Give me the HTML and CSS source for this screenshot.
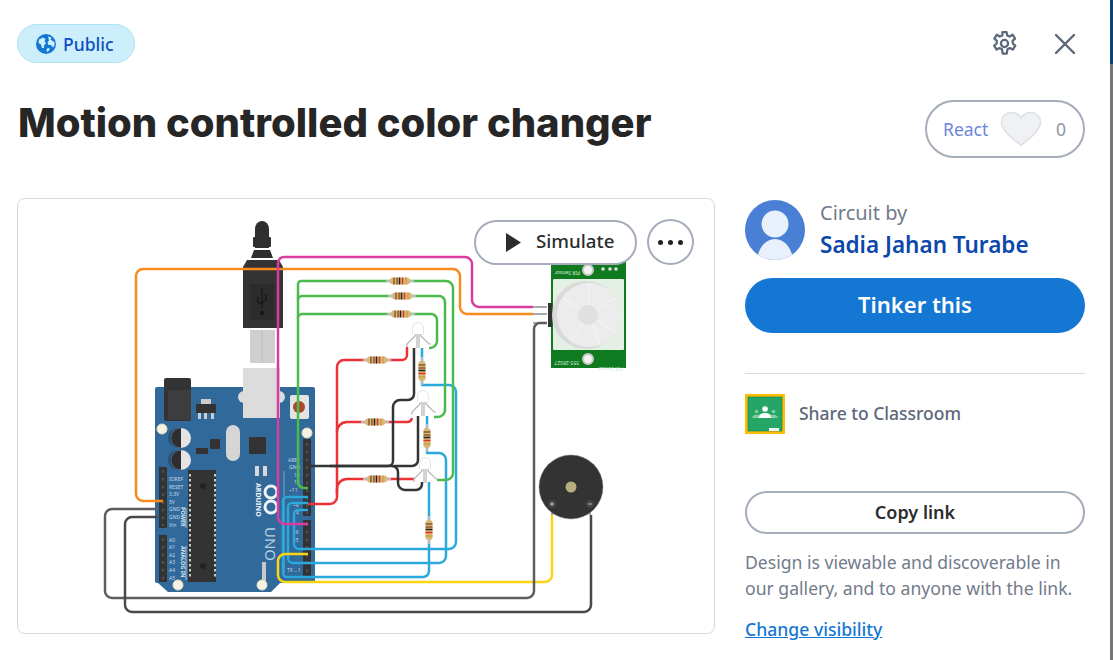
FILE: index.html
```html
<!DOCTYPE html>
<html lang="en">
<head>
    <meta charset="UTF-8">
    <meta name="viewport" content="width=device-width, initial-scale=1.0">
    <title>Motion controlled color changer</title>
    <link rel="stylesheet" href="styles.css">
</head>
<body>

    <div class="dialog">

        <div class="top-bar">
            <span class="public-pill">
                <svg class="globe" viewBox="0 0 20 20">
                    <circle cx="10" cy="10" r="10" fill="#1477d4"/>
                    <path d="M3 5.500 7 3.500 9.500 5 8.500 7.500 10 9 8 11.500 8 14 6 14 5 10.500 2.500 9Z" fill="#cdeffb"/>
                    <path d="M12 2.500 15.500 3.500 14.500 5.500 16.500 7 18.500 8 18.500 11 17 13.500 15 11 12.500 11 11.500 8.500 13 6.500Z" fill="#cdeffb"/>
                    <path d="M11 14.500 13.500 14 13.500 16 11.500 18 10.500 16.500Z" fill="#cdeffb"/>
                </svg>
                Public
            </span>
            <div class="top-icons">
                <svg class="gear" viewBox="0 0 24 24" fill="none" stroke="#5c677a" stroke-width="2" stroke-linejoin="round">
                    <circle cx="12" cy="12" r="3.200"/>
                    <path d="M10.200 1.800h3.600l.6 3 2.200 1 2.600-1.600 2.200 3.400-2.200 2 .2 2.400 2.200 1.900-2.200 3.500-2.600-1.300-2.200 1-.6 3.900h-3.600l-.6-3.900-2.200-1-2.600 1.300-2.200-3.500 2.200-1.900.2-2.400-2.200-2 2.200-3.400 2.600 1.600 2.200-1z"/>
                </svg>
                <svg class="close" viewBox="0 0 20 20" fill="none" stroke="#5c677a" stroke-width="2.400" stroke-linecap="round">
                    <path d="M1 1 19 19M19 1 1 19"/>
                </svg>
            </div>
        </div>

        <div class="title-row">
            <h1>Motion controlled color changer</h1>
            <div class="react-btn">
                <span class="react-label">React</span>
                <svg class="heart" viewBox="0 0 42 36">
                    <path d="M21 34.500C13 27.500 1.500 20 1.500 11 1.500 5.500 5.500 1.500 11 1.500 15 1.500 19 3.500 21 7 23 3.500 27 1.500 31 1.500 36.500 1.500 40.500 5.500 40.500 11 40.500 20 29 27.500 21 34.500Z" fill="#f0f1f3" stroke="#dcdfe3" stroke-width="1.500"/>
                </svg>
                <span class="react-count">0</span>
            </div>
        </div>

        <div class="content">
            <div class="circuit-card">
                <svg class="circuit" viewBox="17 198 698 436">
                    <defs>
                        <g id="res">
                            <path d="M-14 0h28" stroke="#bbb" stroke-width="2"/>
                            <rect x="-10" y="-3.500" width="20" height="7" rx="3" fill="#d8b878"/>
                            <path d="M-6-3.500v7M-3-3.500v7" stroke="#8b5a2b" stroke-width="1.500"/>
                            <path d="M-.5-3.500v7" stroke="#222" stroke-width="1.500"/>
                            <path d="M2.500-3.500v7" stroke="#e3301f" stroke-width="1.500"/>
                            <path d="M6-3.500v7" stroke="#c9a24a" stroke-width="1.500"/>
                        </g>
                        <g id="led">
                            <path d="M-5.500 2V-4a5.500 5.500 0 0 1 11 0V2" fill="#fff" stroke="#e4e4e4"/>
                            <path d="M-3 2V4L-11 12V15M-1 2V16M1 2V16M3 2V4L11 12H13" fill="none" stroke="#b4b4b4" stroke-width="1.200"/>
                        </g>
                    </defs>

                    <!-- usb cable -->
                    <path d="M250 330h25v33h-25z" fill="#cfcfcf"/>
                    <path d="M262 330v33" stroke="#bdbdbd"/>
                    <path d="M255 248v-19a7 8 0 0 1 14 0v19z" fill="#2f2f2f"/>
                    <rect x="253" y="237" width="18" height="10" rx="1" fill="#2f2f2f"/>
                    <path d="M254 250h16l3 8h-22z" fill="#2f2f2f"/>
                    <path d="M247 260h32l4 7v61h-40v-61z" fill="#333"/>
                    <rect x="250" y="284" width="24" height="36" fill="#2c2c2c"/>
                    <path d="M262 288v20M258 297v5l4 3M266 294v6l-4 3" stroke="#161616" stroke-width="1.200" fill="none"/>
                    <circle cx="262" cy="313" r="2.200" fill="#161616"/>

                    <!-- arduino board -->
                    <path d="M157 387H313a2 2 0 0 1 2 2V581a2 2 0 0 1-2 2H280L271 592H168L158 583H157a2 2 0 0 1-2-2V389a2 2 0 0 1 2-2Z" fill="#30699a"/>
                    <rect x="243" y="368" width="37" height="50" fill="#dcdcdc"/>
                    <circle cx="244" cy="397" r="6" fill="#dcdcdc"/>
                    <circle cx="279" cy="397" r="6" fill="#dcdcdc"/>
                    <rect x="290" y="395" width="19" height="24" rx="2" fill="#e3e3e3"/>
                    <circle cx="299" cy="407" r="6" fill="#a8482f"/>
                    <rect x="164" y="378" width="27" height="43" rx="2" fill="#333"/>
                    <rect x="168" y="390" width="23" height="30" fill="#3d3d3d"/>
                    <rect x="196" y="404" width="20" height="9" fill="#333"/>
                    <rect x="201" y="399" width="10" height="5" fill="#ccc"/>
                    <path d="M198 413h3v6h-3zM204 413h3v6h-3zM211 413h3v6h-3z" fill="#ccc"/>
                    <circle cx="178" cy="438" r="10" fill="#26517a"/>
                    <circle cx="181" cy="438" r="10" fill="#e4e4e4"/>
                    <path d="M181 428a10 10 0 0 0 0 20z" fill="#2e2e2e"/>
                    <circle cx="178" cy="460" r="10" fill="#26517a"/>
                    <circle cx="181" cy="460" r="10" fill="#e4e4e4"/>
                    <path d="M181 450a10 10 0 0 0 0 20z" fill="#2e2e2e"/>
                    <rect x="226" y="425" width="14" height="36" rx="7" fill="#d5d5d5"/>
                    <rect x="210" y="439" width="10" height="10" rx="1" fill="#333"/>
                    <rect x="249" y="437" width="17" height="17" rx="1" fill="#333"/>
                    <rect x="196" y="448" width="12" height="6" fill="#333"/>
                    <rect x="255" y="466" width="4" height="10" fill="#d8d8d8"/>
                    <rect x="263" y="466" width="4" height="10" fill="#d8d8d8"/>
                    <rect x="188" y="470" width="28" height="112" fill="#333"/>
                    <path d="M190 474v104M215 474v104" stroke="#fff" stroke-width="1.500" stroke-dasharray="2.500 2.500"/>
                    <circle cx="203" cy="486" r="3" fill="#222"/>
                    <circle cx="203" cy="566" r="3" fill="#222"/>
                    <rect x="159" y="467" width="8" height="61" fill="#333"/>
                    <rect x="159" y="535" width="8" height="47" fill="#333"/>
                    <rect x="303" y="439" width="8" height="77" fill="#333"/>
                    <rect x="303" y="520" width="8" height="57" fill="#333"/>
                    <path d="M307 443v71M307 523v52M163 470v56M163 538v42" stroke="#4d4d4d" stroke-width="2.500" stroke-dasharray="3 4.700"/>
                    <path d="M262 562h4v20h-4z" fill="#c8c8c8"/>
                    <path d="M284 471v102" stroke="#7fa6c6"/>
                    <path d="M186 508v20M186 546v34" stroke="#cfdde8" stroke-width=".8"/>
                    <circle cx="162" cy="429" r="5" fill="#f5f2e4" stroke="#e6dfba"/>
                    <circle cx="307" cy="433" r="5" fill="#f5f2e4" stroke="#e6dfba"/>
                    <circle cx="178" cy="585" r="5" fill="#f5f2e4" stroke="#e6dfba"/>
                    <circle cx="262" cy="585" r="5" fill="#f5f2e4" stroke="#e6dfba"/>
                    <g class="pin-text">
                        <text x="169" y="481">IOREF</text>
                        <text x="169" y="489">RESET</text>
                        <text x="169" y="496">3.3V</text>
                        <text x="169" y="504">5V</text>
                        <text x="169" y="511">GND</text>
                        <text x="169" y="519">GND</text>
                        <text x="169" y="527">Vin</text>
                        <text x="169" y="542">A0</text>
                        <text x="169" y="549">A1</text>
                        <text x="169" y="557">A2</text>
                        <text x="169" y="564">A3</text>
                        <text x="169" y="572">A4</text>
                        <text x="169" y="580">A5</text>
                        <text x="288" y="462">AREF</text>
                        <text x="289" y="469">GND</text>
                        <text x="294" y="477">13</text>
                        <text x="294" y="484">12</text>
                        <text x="289" y="492">~11</text>
                        <text x="293" y="507">~9</text>
                        <text x="296" y="514">8</text>
                        <text x="293" y="534">~6</text>
                        <text x="293" y="542">~5</text>
                        <text x="287" y="572">TX→1</text>
                    </g>
                    <text class="board-label" transform="translate(181 507) rotate(90)">POWER</text>
                    <text class="board-label" transform="translate(181 546) rotate(90)">ANALOG IN</text>
                    <text class="brand-small" transform="translate(256 483) rotate(90)">ARDUINO</text>
                    <text class="brand-uno" transform="translate(265 527) rotate(90)">UNO</text>
                    <g fill="none" stroke="#eef3f7" stroke-width="3">
                        <circle cx="271" cy="492" r="6"/>
                        <circle cx="271" cy="507" r="6"/>
                    </g>

                    <!-- part legs -->
                    <g fill="none" stroke="#a9a9a9" stroke-width="2">
                        <path d="M533 307h14M533 314h14M533 323h14M552 515V505M590 515V505"/>
                    </g>

                    <!-- wires -->
                    <g fill="none" stroke-width="2.500" stroke-linejoin="round">
                        <path stroke="#29a9dc" d="M308 497H287a4 4 0 0 0-4 4V573a4 4 0 0 0 4 4H423a6 6 0 0 0 6-6V482"/>
                        <path stroke="#29a9dc" d="M308 503H292a4 4 0 0 0-4 4V558a5 5 0 0 0 5 5H439a7 7 0 0 0 7-7V460a7 7 0 0 0-7-7H427V416"/>
                        <path stroke="#29a9dc" d="M308 510H298a4 4 0 0 0-4 4V544a5 5 0 0 0 5 5H449a7 7 0 0 0 7-7V392a7 7 0 0 0-7-7H422V348"/>
                        <path stroke="#fbd413" d="M308 554H285a7 7 0 0 0-7 7V575a7 7 0 0 0 7 7H545a7 7 0 0 0 7-7V515"/>
                        <path stroke="#5b5d60" d="M158 509H112a7 7 0 0 0-7 7V591a7 7 0 0 0 7 7H527a7 7 0 0 0 7-7V329a6 6 0 0 1 6-6H547"/>
                        <path stroke="#48494b" d="M158 517H132a7 7 0 0 0-7 7V605a7 7 0 0 0 7 7H584a7 7 0 0 0 7-7V515"/>
                        <path stroke="#f78b1c" d="M163 501H143a7 7 0 0 1-7-7V276a7 7 0 0 1 7-7H453a7 7 0 0 1 7 7V307a7 7 0 0 0 7 7H533"/>
                        <path stroke="#d93ca0" d="M308 524H285a7 7 0 0 1-7-7V263a6 6 0 0 1 6-6H465a7 7 0 0 1 7 7V300a7 7 0 0 0 7 7H533"/>
                        <path stroke="#4bbb4b" d="M308 488H304a6 6 0 0 1-6-6V284a3 3 0 0 1 3-3H446a7 7 0 0 1 7 7V473a7 7 0 0 1-7 7H437"/>
                        <path stroke="#4bbb4b" d="M298 300a4 4 0 0 1 4-4H439a6 6 0 0 1 6 6V410a7 7 0 0 1-7 7H434"/>
                        <path stroke="#4bbb4b" d="M298 318a4 4 0 0 1 4-4H431a6 6 0 0 1 6 6V341a7 7 0 0 1-7 7H429"/>
                        <path stroke="#ed3237" d="M308 504H330a7 7 0 0 0 7-7V367a7 7 0 0 1 7-7H402a5 5 0 0 0 5-5V347"/>
                        <path stroke="#ed3237" d="M337 432a10 10 0 0 1 10-10H407a5 5 0 0 0 5-4"/>
                        <path stroke="#ed3237" d="M337 494V489a10 10 0 0 1 10-10H414"/>
                        <path stroke="#333436" d="M308 466H388a5 5 0 0 0 5-5V407a7 7 0 0 1 7-7H408a6 6 0 0 0 6-6V348"/>
                        <path stroke="#333436" d="M330 466H412a6 6 0 0 0 6-6V416"/>
                        <path stroke="#333436" d="M392 466a6 6 0 0 1 6 6V483a7 7 0 0 0 7 7H416a6 6 0 0 0 6-6V482"/>
                    </g>

                    <!-- resistors -->
                    <use href="#res" x="400" y="281"/>
                    <use href="#res" x="402" y="296"/>
                    <use href="#res" x="401" y="314"/>
                    <use href="#res" x="377" y="360"/>
                    <use href="#res" x="375" y="422"/>
                    <use href="#res" x="377" y="479"/>
                    <use href="#res" transform="translate(422 371) rotate(90)"/>
                    <use href="#res" transform="translate(427 438) rotate(90)"/>
                    <use href="#res" transform="translate(429 530) rotate(90)"/>

                    <!-- rgb leds -->
                    <use href="#led" x="418" y="332"/>
                    <use href="#led" x="423" y="400"/>
                    <use href="#led" x="425" y="467"/>

                    <!-- pir sensor -->
                    <rect x="551" y="262" width="75" height="106" fill="#0f7a1f"/>
                    <rect x="553" y="279" width="71" height="71" rx="1" fill="#e3f0e3"/>
                    <rect x="548" y="303" width="4" height="24" fill="#333"/>
                    <circle cx="586" cy="315" r="34" fill="#dadada"/>
                    <circle cx="589" cy="315" r="32" fill="#ececec"/>
                    <path d="M589 315 563 298M589 315 589 283M589 315 615 298M589 315 615 332M589 315 600 345M589 315 571 341" stroke="#f4f4f4" stroke-width="1.200"/>
                    <circle cx="588" cy="315" r="10" fill="#e0e0e0"/>
                    <circle cx="588" cy="270" r="5" fill="#f3f3f3" stroke="#c9c9c9" stroke-width="2"/>
                    <circle cx="588" cy="359" r="5" fill="#f3f3f3" stroke="#c9c9c9" stroke-width="2"/>
                    <text class="pir-text" transform="translate(580 271) rotate(180)">PIR Sensor</text>
                    <text class="pir-text" transform="translate(623 367) rotate(180)">PIR Sensor</text>
                    <text class="pir-text" transform="translate(579 361) rotate(180)">555-28027</text>
                    <circle cx="603" cy="269" r="1.800" fill="#ddd"/>
                    <circle cx="610" cy="269" r="1.800" fill="#ddd"/>
                    <circle cx="616" cy="269" r="1.800" fill="#ddd"/>

                    <!-- piezo -->
                    <circle cx="571" cy="487" r="32" fill="#333" stroke="#888" stroke-width=".5"/>
                    <circle cx="571" cy="487" r="5.500" fill="#b8ab7d"/>
                    <circle cx="552" cy="504" r="4" fill="#444"/>
                    <circle cx="590" cy="504" r="4" fill="#444"/>
                    <path d="M550 504h4M552 502v4M588 504h4" stroke="#bbb"/>
                </svg>
                <div class="sim-controls">
                    <button class="sim-btn">
                        <svg class="play" viewBox="0 0 15 19"><path d="M0 0 15 9.500 0 19Z" fill="#2c2c2c"/></svg>
                        <span class="sim-label">Simulate</span>
                    </button>
                    <button class="more-btn"><span></span><span></span><span></span></button>
                </div>
            </div>

            <div class="sidebar">
                <div class="author">
                    <svg class="avatar" viewBox="0 0 60 60">
                        <clipPath id="round"><circle cx="30" cy="30" r="30"/></clipPath>
                        <g clip-path="url(#round)">
                            <rect width="60" height="60" fill="#4a7fd6"/>
                            <circle cx="30" cy="24" r="13.500" fill="#e8f0fb"/>
                            <ellipse cx="30" cy="62" rx="18" ry="23" fill="#e8f0fb"/>
                        </g>
                    </svg>
                    <div class="author-text">
                        <div class="author-label">Circuit by</div>
                        <a class="author-name">Sadia Jahan Turabe</a>
                    </div>
                </div>
                <button class="tinker-btn">Tinker this</button>
                <hr class="divider">
                <div class="classroom">
                    <svg class="classroom-icon" viewBox="0 0 40 40">
                        <rect width="40" height="40" fill="#fdbc05"/>
                        <rect x="3" y="3" width="34" height="34" fill="#25a667"/>
                        <rect x="3" y="3" width="34" height="34" fill="none" stroke="#1a8a52" stroke-width=".7"/>
                        <circle cx="20" cy="15" r="2.800" fill="#fff"/>
                        <path d="M13 24a7 5 0 0 1 14 0z" fill="#fff"/>
                        <circle cx="11.500" cy="17.500" r="1.800" fill="#7fcfa3"/>
                        <circle cx="28.500" cy="17.500" r="1.800" fill="#7fcfa3"/>
                        <path d="M7 24a4.500 3.500 0 0 1 8-2 8 6 0 0 0-2 2zM33 24a4.500 3.500 0 0 0-8-2 8 6 0 0 1 2 2z" fill="#7fcfa3"/>
                        <rect x="24" y="34" width="10" height="3" fill="#f1f1f1"/>
                    </svg>
                    <span>Share to Classroom</span>
                </div>
                <button class="copy-btn">Copy link</button>
                <p class="visibility-note">Design is viewable and discoverable in our gallery, and to anyone with the link.</p>
                <a class="visibility-link">Change visibility</a>
            </div>
        </div>
    </div>

    <div class="edge">
        <div class="edge-top"></div>
        <div class="edge-rest"></div>
    </div>

</body>
</html>
```

FILE: styles.css
```css
* {
    box-sizing: border-box;
}

html, body {
    height: 100%;
}

body {
    margin: 0;
    display: flex;
    overflow: hidden;
    background-color: #fff;
    font-family: "Noto Sans", Arial, sans-serif;
    color: #2c2c2c;
}

.dialog {
    flex: 1;
    padding: 24px 25px 0 17px;
}

/* Top bar */
.top-bar {
    display: flex;
    justify-content: space-between;
    align-items: center;
    height: 39px;
}

.public-pill {
    display: flex;
    align-items: center;
    gap: 7px;
    width: 118px;
    height: 39px;
    padding-left: 18px;
    background: #cdeffb;
    border: 1px solid #aee3f5;
    border-radius: 20px;
    color: #0e4fc4;
    font-size: 17.500px;
    font-weight: 500;
}

.globe {
    width: 20px;
    height: 20px;
}

.top-icons {
    display: flex;
    align-items: center;
    gap: 37px;
    padding-right: 10px;
}

.gear {
    width: 27px;
    height: 27px;
}

.close {
    width: 20px;
    height: 20px;
}

/* Title row */
.title-row {
    display: flex;
    justify-content: space-between;
    align-items: flex-start;
    margin-top: 37px;
    height: 98px;
}

h1 {
    margin: 0 0 0 1px;
    font-family: Inter, Roboto, Arial, sans-serif;
    font-size: 40px;
    font-weight: 800;
    line-height: 46px;
    color: #262626;
}

.react-btn {
    display: flex;
    align-items: center;
    width: 160px;
    height: 58px;
    padding: 0 17px 0 16px;
    border: 2px solid #a5adba;
    border-radius: 29px;
    font-size: 17.500px;
}

.react-label {
    color: #6a86dc;
}

.heart {
    width: 42px;
    height: 36px;
    margin-left: 12px;
}

.react-count {
    margin-left: auto;
    color: #8b95a5;
}

/* Main content */
.content {
    display: flex;
    justify-content: space-between;
}

.circuit-card {
    position: relative;
    width: 698px;
    height: 436px;
    border: 1px solid #d5d8dc;
    border-radius: 8px;
    overflow: hidden;
}

.circuit {
    display: block;
    width: 698px;
    height: 436px;
    margin: -1px;
}

.pin-text text {
    font-size: 5px;
    fill: #c9d9e6;
}

.board-label {
    font-size: 5.500px;
    font-weight: 700;
    fill: #dfe8ef;
}

.brand-small {
    font-size: 7px;
    font-weight: 700;
    fill: #eef3f7;
}

.brand-uno {
    font-size: 15px;
    fill: #b9cfe0;
}

.pir-text {
    font-size: 5px;
    fill: #d8ecd8;
}

.sim-controls {
    position: absolute;
    top: 20px;
    right: 20px;
    display: flex;
    align-items: center;
    gap: 10px;
}

.sim-btn {
    display: flex;
    align-items: center;
    gap: 15px;
    width: 163px;
    height: 45px;
    padding: 0 0 0 30px;
    background: #fff;
    border: 2px solid #a5adba;
    border-radius: 23px;
    font-family: inherit;
    font-size: 18.700px;
    font-weight: 500;
    color: #2c2c2c;
}

.sim-label {
    padding-bottom: 3px;
}

.play {
    width: 15px;
    height: 19px;
}

.more-btn {
    display: flex;
    align-items: center;
    justify-content: center;
    gap: 5px;
    width: 47px;
    height: 46px;
    padding: 0;
    background: #fff;
    border: 2px solid #a5adba;
    border-radius: 50%;
}

.more-btn span {
    width: 5px;
    height: 5px;
    border-radius: 50%;
    background: #222;
}

/* Sidebar */
.sidebar {
    width: 340px;
    padding-top: 2px;
}

.author {
    display: flex;
    align-items: center;
    gap: 15px;
    height: 60px;
}

.avatar {
    width: 60px;
    height: 60px;
}

.author-label {
    font-size: 20px;
    line-height: 30px;
    color: #717b8a;
}

.author-name {
    display: block;
    font-size: 22.500px;
    line-height: 34px;
    font-weight: 600;
    color: #0b48aa;
}

.tinker-btn {
    display: block;
    width: 100%;
    height: 55px;
    margin-top: 18px;
    padding: 0 0 3px;
    border: 0;
    border-radius: 28px;
    background: #1477d4;
    color: #fff;
    font-family: inherit;
    font-size: 22px;
    font-weight: 600;
}

.divider {
    height: 1px;
    margin: 40px 0 0;
    border: 0;
    background: #d9d9d9;
}

.classroom {
    display: flex;
    align-items: center;
    gap: 14px;
    margin-top: 20px;
    font-size: 17.500px;
    font-weight: 500;
    color: #5c677a;
}

.classroom span {
    padding-bottom: 3px;
}

.classroom-icon {
    width: 40px;
    height: 40px;
}

.copy-btn {
    display: block;
    width: 100%;
    height: 43px;
    margin-top: 57px;
    padding: 0 0 2px;
    background: #fff;
    border: 2px solid #a5adba;
    border-radius: 22px;
    font-family: inherit;
    font-size: 18px;
    font-weight: 600;
    color: #2c2c2c;
}

.visibility-note {
    margin: 15px 0 0;
    font-size: 17.600px;
    line-height: 26px;
    color: #717b8a;
}

.visibility-link {
    display: block;
    margin-top: 16px;
    font-size: 17.600px;
    line-height: 24px;
    font-weight: 500;
    color: #1477d4;
    text-decoration: underline;
}

/* Strip of the page behind the dialog */
.edge {
    display: flex;
    flex-direction: column;
    width: 3px;
}

.edge-top {
    height: 64px;
    background: #0b4278;
}

.edge-rest {
    flex: 1;
    background: #777;
}
```
